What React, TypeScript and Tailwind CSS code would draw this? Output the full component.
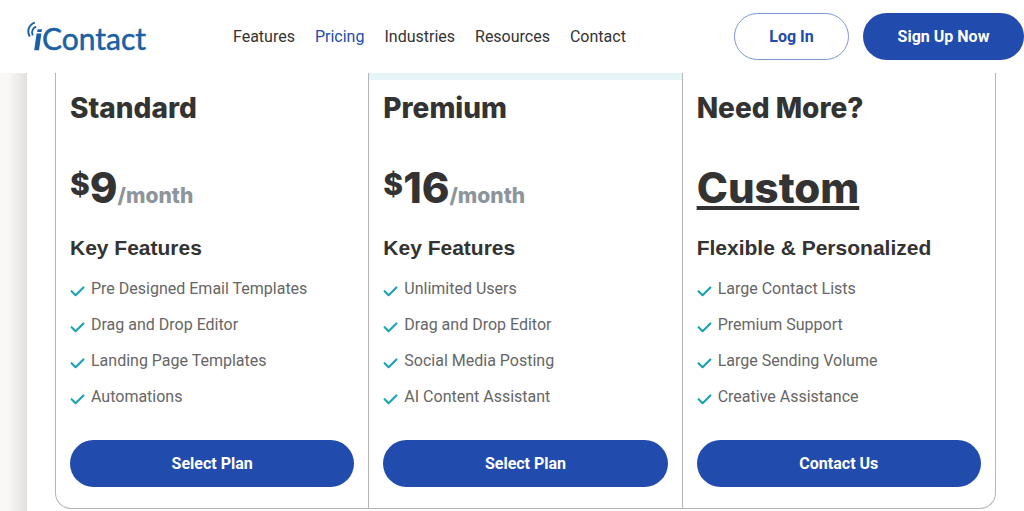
interface Plan {
  name: string;
  price?: string;
  heading: string;
  features: string[];
  cta: string;
}

const NAV_LINKS = ["Features", "Pricing", "Industries", "Resources", "Contact"];

const PLANS: Plan[] = [
  {
    name: "Standard",
    price: "9",
    heading: "Key Features",
    features: ["Pre Designed Email Templates", "Drag and Drop Editor", "Landing Page Templates", "Automations"],
    cta: "Select Plan"
  },
  {
    name: "Premium",
    price: "16",
    heading: "Key Features",
    features: ["Unlimited Users", "Drag and Drop Editor", "Social Media Posting", "AI Content Assistant"],
    cta: "Select Plan"
  },
  {
    name: "Need More?",
    heading: "Flexible & Personalized",
    features: ["Large Contact Lists", "Premium Support", "Large Sending Volume", "Creative Assistance"],
    cta: "Contact Us"
  }
];

function Logo() {
  return (
    <a href="#" aria-label="iContact" className="block w-[206px]">
      <svg width="122" height="36" viewBox="0 0 122 36" fill="none" className="block">
        {/* Signal arcs */}
        <path d="M7.8 3.6C1.800 5.600-.4 12 2.800 17.600" stroke="#1b60a4" strokeWidth="2" />
        <path d="M9.200 7.600C5.400 9 4.200 12.600 5.800 16.400" stroke="#1b60a4" strokeWidth="1.8" />
        {/* Slanted i */}
        <path d="M9.600 14.400h4.800L12 31.200H7.200z" fill="#1b60a4" />
        <path d="M10.600 10.200h4.400l-.5 2.900h-4.300z" fill="#1b60a4" />
        <text
          x="15"
          y="31"
          fill="#1b60a4"
          stroke="#1b60a4"
          strokeWidth="0.5"
          className="font-['Lato',sans-serif] text-[30px]"
        >
          Contact
        </text>
      </svg>
    </a>
  );
}

function Header() {
  return (
    <header className="flex h-[73px] items-center bg-white pl-[27px]">
      <Logo />
      <nav className="flex gap-5">
        {NAV_LINKS.map((link) => (
          <a key={link} href="#" className={link === "Pricing" ? "text-[#214bac]" : "text-[#333333]"}>
            {link}
          </a>
        ))}
      </nav>
      <div className="ml-auto flex gap-3.5 font-bold">
        <button type="button" className="h-[47px] w-[115px] rounded-full border border-[#7f97d0] text-[#214bac]">
          Log In
        </button>
        <button type="button" className="h-[47px] w-[161px] rounded-full bg-[#214bac] text-white">
          Sign Up Now
        </button>
      </div>
    </header>
  );
}

function Check() {
  return (
    <svg width="15" height="12" viewBox="0 0 15 12" fill="none" className="mt-2 shrink-0">
      <path d="M1.600 6.200 5.600 10.200 13.400 2.400" stroke="#1ba3b3" strokeWidth="2.1" strokeLinecap="round" strokeLinejoin="round" />
    </svg>
  );
}

function PlanCard({ plan }: { plan: Plan }) {
  const highlighted = plan.name === "Premium";

  return (
    <section className="flex flex-1 flex-col border-r border-[#b4b6ba] last:border-r-0">
      <div className={highlighted ? "h-[7px] bg-[#e5f4f6]" : "h-[7px]"} />
      <div className="flex flex-col px-3.5 pb-[21px] text-[#333333]">
        <h2 className="mt-2 font-['Inter',sans-serif] text-[28px] leading-10 font-extrabold">{plan.name}</h2>
        <div className="mt-[34px] flex h-[54px] items-start font-['Inter',sans-serif] font-extrabold">
          {plan.price ? (
            <>
              <span className="text-[30px] leading-[44px]">$</span>
              <span className="text-[42px] leading-[52px]">{plan.price}</span>
              <span className="pt-3.5 text-[21px] leading-10 text-[#8d949b]">/month</span>
            </>
          ) : (
            <a href="#" className="text-[42px] leading-[52px] underline decoration-4 underline-offset-3">
              Custom
            </a>
          )}
        </div>
        <h3 className="mt-4 font-['Liberation_Sans',sans-serif] text-[21px] leading-8 font-bold">{plan.heading}</h3>
        <ul className="mt-[13px] flex flex-col gap-3 text-[#666666]">
          {plan.features.map((feature) => (
            <li key={feature} className="flex items-start gap-1.5 leading-6">
              <Check />
              {feature}
            </li>
          ))}
        </ul>
        <button type="button" className="mt-[31px] h-[47px] w-full rounded-full bg-[#214bac] font-bold text-white">
          {plan.cta}
        </button>
      </div>
    </section>
  );
}

export default function App() {
  return (
    <div className="min-h-screen bg-white font-['Roboto',sans-serif] text-base">
      <Header />
      <div className="flex">
        <div className="w-[27px] bg-linear-to-r from-[#f9f8f6] from-30% to-[#e2e0de]" />
        <main className="flex-1 px-7 pb-0.5">
          <div className="flex overflow-hidden rounded-b-2xl border border-t-0 border-[#b4b6ba]">
            {PLANS.map((plan) => (
              <PlanCard key={plan.name} plan={plan} />
            ))}
          </div>
        </main>
      </div>
    </div>
  );
}
